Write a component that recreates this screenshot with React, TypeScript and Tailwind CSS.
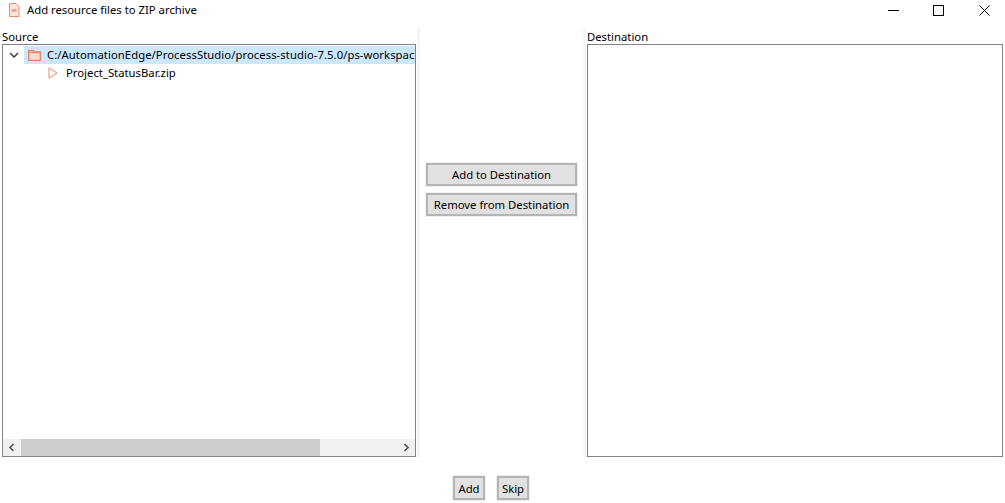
function PdfIcon() {
  return (
    <svg width="12" height="14" viewBox="0 0 12 14" fill="none" className="block">
      <path d="M1.5 .5H8L11 3.5V13.5H1.5Z" fill="#fde4da" stroke="#f28a6c" />
      <rect x="3.5" y="6" width="5" height="3" fill="#f6a48c" />
    </svg>
  );
}

function FolderIcon() {
  return (
    <svg width="13" height="12" viewBox="0 0 13 12" fill="none" className="block shrink-0">
      <path d="M.7 11.3V1.5H5L6.5 3H12.3V11.3Z" fill="#fbdcd0" stroke="#ec7f62" strokeWidth="1.3" />
      <path d="M.7 3.7H12.3" stroke="#ec7f62" />
    </svg>
  );
}

function PlayIcon() {
  return (
    <svg width="10" height="12" viewBox="0 0 10 12" fill="none" className="block shrink-0">
      <path d="M1 .8V11.2L9 6Z" fill="#fff" stroke="#f0876a" />
    </svg>
  );
}

function ActionButton({ label }: { label: string }) {
  return (
    <button className="h-[23px] w-[151px] border-2 border-[#b4b4b4] bg-[#e1e1e1] text-[11.3px] leading-[17px] text-black ring-1 ring-[#f0f0f0]">
      {label}
    </button>
  );
}

function SmallButton({ label }: { label: string }) {
  return (
    <button className="h-[24px] w-[32px] border-2 border-[#b4b4b4] bg-[#e1e1e1] text-[11.3px] leading-[17px] text-black ring-1 ring-[#f0f0f0]">
      {label}
    </button>
  );
}

export default function App() {
  return (
    <div className="flex h-[503px] w-[1005px] flex-col overflow-hidden bg-white font-['Noto_Sans',sans-serif] text-[11.3px] text-black">
      <div className="flex h-[20px] shrink-0 items-center">
        <div className="ml-[8px] w-[19px]">
          <PdfIcon />
        </div>
        <span className="leading-[20px]">Add resource files to ZIP archive</span>
        <div className="ml-auto flex items-center">
          <svg width="11" height="1" viewBox="0 0 11 1" className="mr-[34px]">
            <path d="M0 .5H11" stroke="#000" />
          </svg>
          <svg width="11" height="11" viewBox="0 0 11 11" fill="none" className="mr-[35px]">
            <rect x=".5" y=".5" width="10" height="10" stroke="#000" />
          </svg>
          <svg width="11" height="11" viewBox="0 0 11 11" fill="none" className="mr-[15px]">
            <path d="M.5 .5L10.5 10.5M10.5 .5L.5 10.5" stroke="#000" />
          </svg>
        </div>
      </div>

      <div className="mt-[8px] flex h-[429px] shrink-0">
        <div className="ml-[2px] flex w-[414px] shrink-0 flex-col">
          <div className="h-[16px] leading-[17px]">Source</div>
          <div className="flex h-[413px] flex-col overflow-hidden border border-[#82828e]">
            <div className="flex-1 overflow-hidden pt-[1px]">
              <div className="flex h-[18px] items-center">
                <svg width="10" height="6" viewBox="0 0 10 6" fill="none" className="ml-[6px] mr-[5px] shrink-0">
                  <path d="M1 1L5 5L9 1" stroke="#404040" strokeWidth="1.5" />
                </svg>
                <div className="flex h-[18px] min-w-0 flex-1 items-center overflow-hidden bg-[#cce8ff] pl-[4px]">
                  <FolderIcon />
                  <span className="ml-[6px] whitespace-nowrap tracking-[0.05px]">C:/AutomationEdge/ProcessStudio/process-studio-7.5.0/ps-workspac</span>
                </div>
              </div>
              <div className="flex h-[18px] items-center pl-[45px]">
                <PlayIcon />
                <span className="ml-[8px] whitespace-nowrap">Project_StatusBar.zip</span>
              </div>
            </div>
            <div className="flex h-[17px] shrink-0 items-center bg-[#f0f0f0]">
              <svg width="18" height="17" viewBox="0 0 18 17" fill="none" className="shrink-0">
                <path d="M10.5 5L7 8.5L10.5 12" stroke="#505050" strokeWidth="1.6" />
              </svg>
              <div className="h-[17px] w-[299px] bg-[#cdcdcd]" />
              <div className="flex-1" />
              <svg width="18" height="17" viewBox="0 0 18 17" fill="none" className="shrink-0">
                <path d="M7.5 5L11 8.5L7.5 12" stroke="#505050" strokeWidth="1.6" />
              </svg>
            </div>
          </div>
        </div>

        <div className="ml-[1px] flex w-[3px] shrink-0 bg-[#f5f5f5]" />

        <div className="flex w-[163px] shrink-0 flex-col gap-[7px] pt-[135px] pl-[6px]">
          <ActionButton label="Add to Destination" />
          <ActionButton label="Remove from Destination" />
        </div>

        <div className="w-[3px] shrink-0 bg-[#f5f5f5]" />

        <div className="ml-[1px] flex w-[416px] shrink-0 flex-col">
          <div className="h-[16px] leading-[17px]">Destination</div>
          <div className="h-[413px] border border-[#82828e]" />
        </div>
      </div>

      <div className="mt-[19px] ml-[453px] flex gap-[12px]">
        <SmallButton label="Add" />
        <SmallButton label="Skip" />
      </div>
    </div>
  );
}
